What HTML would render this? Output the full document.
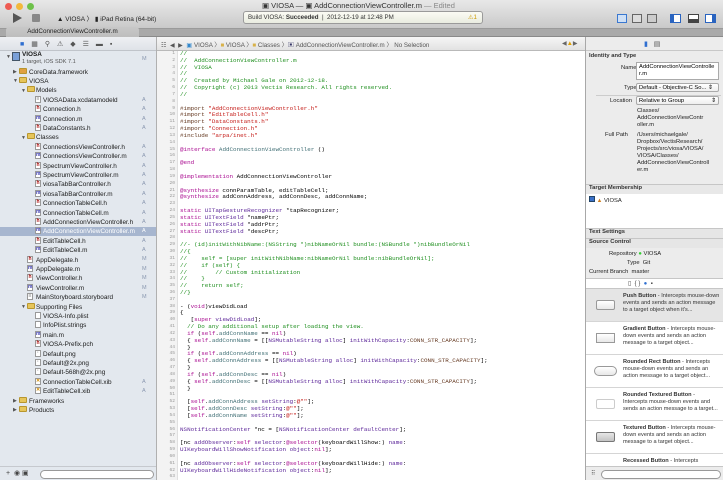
<!DOCTYPE html>
<html><head><meta charset="utf-8"><style>
*{margin:0;padding:0;box-sizing:border-box}
body{width:723px;height:480px;overflow:hidden;position:relative;font-family:"Liberation Sans",sans-serif;background:#fff}
.a{position:absolute}
#title{left:0;top:0;width:723px;height:29px;background:linear-gradient(#e8e8e8,#c9c9c9);border-bottom:1px solid #9a9a9a}
.dot{position:absolute;width:7px;height:7px;border-radius:50%;top:3px}
#tabbar{left:0;top:29px;width:723px;height:8px;background:#a9a9a9;border-bottom:1px solid #8a8a8a}
#nav{left:0;top:37px;width:157px;height:443px;background:#e3e8ee;border-right:1px solid #b0b0b0}
.r{position:absolute;font-size:6.4px;color:#1a1a1a;white-space:nowrap;height:9.4px;line-height:9.4px}
.ic{position:absolute;width:6px;height:7px;top:1.2px;border:1px solid #999;background:#fff;font-size:5px;line-height:5px;text-align:center;font-weight:bold;color:#a11}
.fd{position:absolute;width:8px;height:6px;top:1.7px;background:#e6c55a;border:1px solid #b8962e;border-radius:1px}
.st{position:absolute;left:142px;font-size:5.5px;color:#8a98b0}
.tri{position:absolute;font-size:5px;color:#555}
#ed{left:157px;top:37px;width:428px;height:443px;background:#fff}
#jump{left:157px;top:37px;width:428px;height:14px;background:linear-gradient(#f6f6f6,#e2e2e2);border-bottom:1px solid #b9b9b9;font-size:6.2px;color:#222}
#gut{left:157px;top:51px;width:21px;height:429px;background:#f3f3f3;border-right:1px solid #e0e0e0}
pre{font-family:"Liberation Mono",monospace;font-size:5.9px;line-height:6.83px}
#ln{left:157px;top:51px;width:18px;text-align:right;color:#999;font-size:4.6px}
#code{left:180px;top:51px;color:#000}
.c{color:#1f8f1f}.s{color:#c41a16}.k{color:#aa0d91}.p{color:#5c2699}.t{color:#3f6e74}.m{color:#643820}
#insp{left:585px;top:37px;width:138px;height:443px;background:#ececec;border-left:1px solid #a8a8a8}
.lb{position:absolute;font-size:5.8px;color:#222;white-space:nowrap}
.hd{position:absolute;left:0;width:138px;font-size:5.8px;font-weight:bold;color:#333;padding-left:3px;border-top:1px solid #c6c6c6;background:#e6e6e6}
.lib{position:absolute;left:0;width:138px;height:33px;border-bottom:1px solid #d5d5d5;background:#fff}
.lib .btn{position:absolute;left:10px;top:11px;width:19px;height:10px;border:1px solid #999;border-radius:2px;background:linear-gradient(#fff,#e8e8e8)}
.lib .tx{position:absolute;left:37px;top:4px;width:98px;font-size:5.6px;line-height:7px;color:#333}
</style></head><body>
<div id="title" class="a">
<div class="dot" style="left:5px;background:#ee5b52"></div>
<div class="dot" style="left:16px;background:#f2b83c"></div>
<div class="dot" style="left:27px;background:#6ec14a"></div>
<div class="a" style="left:13px;top:13px;width:0;height:0;border-left:9px solid #555;border-top:5px solid transparent;border-bottom:5px solid transparent"></div>
<div class="a" style="left:32px;top:14px;width:8px;height:8px;background:#888;border-radius:1px"></div>
<div class="a" style="left:57px;top:13px;font-size:6.5px;color:#222">▲ VIOSA 〉 ▮ iPad Retina (64-bit)</div>
<div class="a" style="left:262px;top:1px;font-size:7.5px;color:#333">▣ VIOSA — ▣ AddConnectionViewController.m <span style="color:#888">— Edited</span></div>
<div class="a" style="left:243px;top:11px;width:240px;height:13px;background:linear-gradient(#fbfbf4,#e9ece0);border:1px solid #9a9a9a;border-radius:3px;font-size:6.2px;color:#333;padding:2px 4px">Build VIOSA: <b>Succeeded</b> &nbsp;| &nbsp;2012-12-19 at 12:48 PM<span style="position:absolute;right:5px;color:#c90">⚠1</span></div>
<div class="a" style="left:617px;top:14px;width:10px;height:9px;border:1px solid #3a78d0;background:#cfe0f5"></div>
<div class="a" style="left:632px;top:14px;width:10px;height:9px;border:1px solid #666;background:#ddd"></div>
<div class="a" style="left:647px;top:14px;width:10px;height:9px;border:1px solid #666;background:#ccc"></div>
<div class="a" style="left:670px;top:14px;width:11px;height:9px;border:1px solid #2a64c0;border-left:4px solid #2a64c0;background:#fff"></div>
<div class="a" style="left:688px;top:14px;width:11px;height:9px;border:1px solid #444;border-bottom:4px solid #444;background:#fff"></div>
<div class="a" style="left:705px;top:14px;width:11px;height:9px;border:1px solid #2a64c0;border-right:4px solid #2a64c0;background:#fff"></div>
</div>
<div id="tabbar" class="a"><div class="a" style="left:6px;top:-2px;width:133px;height:10px;background:linear-gradient(#c8c8c8,#bdbdbd);border-radius:3px 3px 0 0;font-size:6.3px;text-align:center;color:#222;line-height:10px">AddConnectionViewController.m</div></div>
<div id="nav" class="a">
<div class="a" style="left:0;top:0;width:156px;height:14px;background:linear-gradient(#eef0f3,#dfe3e8);border-bottom:1px solid #c0c4ca;font-size:7px;color:#555;letter-spacing:7px;padding:3px 0 0 20px"><span style="color:#2f6fd0">■</span>▦⚲⚠◆☰▬▪</div>
</div>
<div class="a" style="left:0;top:227px;width:156px;height:9.4px;background:#a7b6cf"></div>
<div id="rows"></div>
<!-- rows -->
<div class="tri" style="left:6px;top:54px">▼</div>
<div class="a" style="left:12px;top:52px;width:8px;height:9px;background:#7aa0d8;border:1px solid #456"></div>
<div class="r" style="left:22px;top:50px;font-weight:bold">VIOSA</div>
<div class="r" style="left:22px;top:58px;font-size:5.6px;color:#555">1 target, iOS SDK 7.1</div><div class="st" style="top:56px">M</div>
<div class="tri" style="left:13px;top:69px">▶</div><div class="fd" style="left:19px;top:67.5px;background:#e0a040"></div><div class="r" style="left:29px;top:67.5px">CoreData.framework</div>
<div class="tri" style="left:13px;top:78px">▼</div><div class="fd" style="left:19px;top:76.9px"></div><div class="r" style="left:29px;top:76.9px">VIOSA</div>
<div class="tri" style="left:21px;top:88px">▼</div><div class="fd" style="left:27px;top:86.3px"></div><div class="r" style="left:36px;top:86.3px">Models</div>
<div class="ic" style="left:35px;top:95.7px;color:#777">≡</div><div class="r" style="left:43px;top:95.7px">VIOSAData.xcdatamodeld</div><div class="st" style="top:97px">A</div>
<div class="ic" style="left:35px;top:105.1px">h</div><div class="r" style="left:43px;top:105.1px">Connection.h</div><div class="st" style="top:106px">A</div>
<div class="ic" style="left:35px;top:114.5px;color:#33a">m</div><div class="r" style="left:43px;top:114.5px">Connection.m</div><div class="st" style="top:116px">A</div>
<div class="ic" style="left:35px;top:123.9px">h</div><div class="r" style="left:43px;top:123.9px">DataConstants.h</div><div class="st" style="top:125px">A</div>
<div class="tri" style="left:21px;top:135px">▼</div><div class="fd" style="left:27px;top:133.3px"></div><div class="r" style="left:36px;top:133.3px">Classes</div>
<div class="ic" style="left:35px;top:142.7px">h</div><div class="r" style="left:43px;top:142.7px">ConnectionsViewController.h</div><div class="st" style="top:144px">A</div>
<div class="ic" style="left:35px;top:152.1px;color:#33a">m</div><div class="r" style="left:43px;top:152.1px">ConnectionsViewController.m</div><div class="st" style="top:153px">A</div>
<div class="ic" style="left:35px;top:161.5px">h</div><div class="r" style="left:43px;top:161.5px">SpectrumViewController.h</div><div class="st" style="top:163px">A</div>
<div class="ic" style="left:35px;top:170.9px;color:#33a">m</div><div class="r" style="left:43px;top:170.9px">SpectrumViewController.m</div><div class="st" style="top:172px">A</div>
<div class="ic" style="left:35px;top:180.3px">h</div><div class="r" style="left:43px;top:180.3px">viosaTabBarController.h</div><div class="st" style="top:181px">A</div>
<div class="ic" style="left:35px;top:189.7px;color:#33a">m</div><div class="r" style="left:43px;top:189.7px">viosaTabBarController.m</div><div class="st" style="top:191px">A</div>
<div class="ic" style="left:35px;top:199.1px">h</div><div class="r" style="left:43px;top:199.1px">ConnectionTableCell.h</div><div class="st" style="top:200px">A</div>
<div class="ic" style="left:35px;top:208.5px;color:#33a">m</div><div class="r" style="left:43px;top:208.5px">ConnectionTableCell.m</div><div class="st" style="top:210px">A</div>
<div class="ic" style="left:35px;top:217.9px">h</div><div class="r" style="left:43px;top:217.9px">AddConnectionViewController.h</div><div class="st" style="top:219px">A</div>
<div class="ic" style="left:35px;top:227.3px;color:#33a">m</div><div class="r" style="left:43px;top:227.3px;color:#fff">AddConnectionViewController.m</div><div class="st" style="top:228px;color:#fff">A</div>
<div class="ic" style="left:35px;top:236.7px">h</div><div class="r" style="left:43px;top:236.7px">EditTableCell.h</div><div class="st" style="top:238px">A</div>
<div class="ic" style="left:35px;top:246.1px;color:#33a">m</div><div class="r" style="left:43px;top:246.1px">EditTableCell.m</div><div class="st" style="top:247px">A</div>
<div class="ic" style="left:27px;top:255.5px">h</div><div class="r" style="left:36px;top:255.5px">AppDelegate.h</div><div class="st" style="top:256px">M</div>
<div class="ic" style="left:27px;top:264.9px;color:#33a">m</div><div class="r" style="left:36px;top:264.9px">AppDelegate.m</div><div class="st" style="top:266px">M</div>
<div class="ic" style="left:27px;top:274.3px">h</div><div class="r" style="left:36px;top:274.3px">ViewController.h</div><div class="st" style="top:275px">M</div>
<div class="ic" style="left:27px;top:283.7px;color:#33a">m</div><div class="r" style="left:36px;top:283.7px">ViewController.m</div><div class="st" style="top:285px">M</div>
<div class="ic" style="left:27px;top:293.1px;color:#777">≡</div><div class="r" style="left:36px;top:293.1px">MainStoryboard.storyboard</div><div class="st" style="top:294px">M</div>
<div class="tri" style="left:21px;top:304px">▼</div><div class="fd" style="left:27px;top:302.5px"></div><div class="r" style="left:36px;top:302.5px">Supporting Files</div>
<div class="ic" style="left:35px;top:311.9px;color:#777"></div><div class="r" style="left:43px;top:311.9px">VIOSA-Info.plist</div>
<div class="ic" style="left:35px;top:321.3px;color:#777"></div><div class="r" style="left:43px;top:321.3px">InfoPlist.strings</div>
<div class="ic" style="left:35px;top:330.7px;color:#33a">m</div><div class="r" style="left:43px;top:330.7px">main.m</div>
<div class="ic" style="left:35px;top:340.1px">h</div><div class="r" style="left:43px;top:340.1px">VIOSA-Prefix.pch</div>
<div class="ic" style="left:35px;top:349.5px;color:#777">·</div><div class="r" style="left:43px;top:349.5px">Default.png</div>
<div class="ic" style="left:35px;top:358.9px;color:#777">·</div><div class="r" style="left:43px;top:358.9px">Default@2x.png</div>
<div class="ic" style="left:35px;top:368.3px;color:#777">·</div><div class="r" style="left:43px;top:368.3px">Default-568h@2x.png</div>
<div class="ic" style="left:35px;top:377.7px;color:#c80">✕</div><div class="r" style="left:43px;top:377.7px">ConnectionTableCell.xib</div><div class="st" style="top:379px">A</div>
<div class="ic" style="left:35px;top:387.1px;color:#c80">✕</div><div class="r" style="left:43px;top:387.1px">EditTableCell.xib</div><div class="st" style="top:388px">A</div>
<div class="tri" style="left:13px;top:398px">▶</div><div class="fd" style="left:19px;top:396.5px"></div><div class="r" style="left:29px;top:396.5px">Frameworks</div>
<div class="tri" style="left:13px;top:407px">▶</div><div class="fd" style="left:19px;top:405.9px"></div><div class="r" style="left:29px;top:405.9px">Products</div>
<div class="a" style="left:0;top:466px;width:156px;height:14px;background:#e3e8ee;border-top:1px solid #c6c9ce;font-size:7px;color:#444;padding:2px 0 0 6px">+ &nbsp;◉ ▣<div class="a" style="left:40px;top:3px;width:114px;height:9px;border:1px solid #999;border-radius:5px;background:#fff"></div></div>

<div id="ed" class="a"></div>
<div id="jump" class="a"><div class="a" style="left:4px;top:3px;color:#555">☷ &nbsp;◀ &nbsp;▶ &nbsp;<span style="color:#38c">▣</span> VIOSA 〉<span style="color:#d8b24a">■</span> VIOSA 〉<span style="color:#d8b24a">■</span> Classes 〉<span style="color:#336">▣</span> AddConnectionViewController.m 〉 No Selection</div><div class="a" style="left:405px;top:3px;color:#666">◀<span style="color:#e0a000">▲</span>▶</div></div>
<div id="gut" class="a"></div>
<pre id="ln" class="a">1
2
3
4
5
6
7
8
9
10
11
12
13
14
15
16
17
18
19
20
21
22
23
24
25
26
27
28
29
30
31
32
33
34
35
36
37
38
39
40
41
42
43
44
45
46
47
48
49
50
51
52
53
54
55
56
57
58
59
60
61
62
63</pre>
<pre id="code" class="a"><span class="c">//
//  AddConnectionViewController.m
//  VIOSA
//
//  Created by Michael Gale on 2012-12-18.
//  Copyright (c) 2013 Vectis Research. All rights reserved.
//</span>

<span class="m">#import <span class="s">"AddConnectionViewController.h"</span>
#import <span class="s">"EditTableCell.h"</span>
#import <span class="s">"DataConstants.h"</span>
#import <span class="s">"Connection.h"</span>
#include <span class="s">"arpa/inet.h"</span></span>

<span class="k">@interface</span> <span class="t">AddConnectionViewController</span> ()

<span class="k">@end</span>

<span class="k">@implementation</span> AddConnectionViewController

<span class="k">@synthesize</span> connParamTable, editTableCell;
<span class="k">@synthesize</span> addConnAddress, addConnDesc, addConnName;

<span class="k">static</span> <span class="p">UITapGestureRecognizer</span> *tapRecognizer;
<span class="k">static</span> <span class="p">UITextField</span> *namePtr;
<span class="k">static</span> <span class="p">UITextField</span> *addrPtr;
<span class="k">static</span> <span class="p">UITextField</span> *descPtr;

<span class="c">//- (id)initWithNibName:(NSString *)nibNameOrNil bundle:(NSBundle *)nibBundleOrNil
//{
//    self = [super initWithNibName:nibNameOrNil bundle:nibBundleOrNil];
//    if (self) {
//        // Custom initialization
//    }
//    return self;
//}</span>

- (<span class="k">void</span>)viewDidLoad
{
   [<span class="k">super</span> <span class="p">viewDidLoad</span>];
  <span class="c">// Do any additional setup after loading the view.</span>
  <span class="k">if</span> (<span class="k">self</span>.<span class="t">addConnName</span> == <span class="k">nil</span>)
  { <span class="k">self</span>.<span class="t">addConnName</span> = [[<span class="p">NSMutableString</span> <span class="p">alloc</span>] <span class="p">initWithCapacity</span>:<span class="m">CONN_STR_CAPACITY</span>];
  }
  <span class="k">if</span> (<span class="k">self</span>.<span class="t">addConnAddress</span> == <span class="k">nil</span>)
  { <span class="k">self</span>.<span class="t">addConnAddress</span> = [[<span class="p">NSMutableString</span> <span class="p">alloc</span>] <span class="p">initWithCapacity</span>:<span class="m">CONN_STR_CAPACITY</span>];
  }
  <span class="k">if</span> (<span class="k">self</span>.<span class="t">addConnDesc</span> == <span class="k">nil</span>)
  { <span class="k">self</span>.<span class="t">addConnDesc</span> = [[<span class="p">NSMutableString</span> <span class="p">alloc</span>] <span class="p">initWithCapacity</span>:<span class="m">CONN_STR_CAPACITY</span>];
  }

  [<span class="k">self</span>.<span class="t">addConnAddress</span> <span class="p">setString</span>:<span class="s">@""</span>];
  [<span class="k">self</span>.<span class="t">addConnDesc</span> <span class="p">setString</span>:<span class="s">@""</span>];
  [<span class="k">self</span>.<span class="t">addConnName</span> <span class="p">setString</span>:<span class="s">@""</span>];

<span class="p">NSNotificationCenter</span> *nc = [<span class="p">NSNotificationCenter</span> <span class="p">defaultCenter</span>];

[nc <span class="p">addObserver</span>:<span class="k">self</span> <span class="p">selector</span>:<span class="k">@selector</span>(keyboardWillShow:) <span class="p">name</span>:
<span class="p">UIKeyboardWillShowNotification</span> <span class="p">object</span>:<span class="k">nil</span>];

[nc <span class="p">addObserver</span>:<span class="k">self</span> <span class="p">selector</span>:<span class="k">@selector</span>(keyboardWillHide:) <span class="p">name</span>:
<span class="p">UIKeyboardWillHideNotification</span> <span class="p">object</span>:<span class="k">nil</span>];
</pre>

<div id="insp" class="a">
<div class="a" style="left:0;top:0;width:138px;height:14px;border-bottom:1px solid #c8c8c8;font-size:7px;padding:3px 0 0 58px;color:#555"><span style="color:#2f6fd0">▮</span> &nbsp;&nbsp;▤</div>
<div class="lb" style="left:3px;top:16px;font-weight:bold;color:#333">Identity and Type</div>
<div class="lb" style="left:35px;top:28px">Name</div>
<div class="a" style="left:50px;top:25px;width:83px;height:18px;background:#fff;border:1px solid #aaa;font-size:5.8px;line-height:7px;padding:1px 2px">AddConnectionViewControlle r.m</div>
<div class="lb" style="left:38px;top:48px">Type</div>
<div class="a" style="left:50px;top:46px;width:83px;height:9px;background:linear-gradient(#fff,#eee);border:1px solid #aaa;border-radius:2px;font-size:5.8px;padding:1px 2px">Default - Objective-C So... ⇕</div>
<div class="a" style="left:10px;top:58px;width:125px;height:1px;background:#ccc"></div>
<div class="lb" style="left:24px;top:61px">Location</div>
<div class="a" style="left:50px;top:59px;width:83px;height:9px;background:linear-gradient(#fff,#eee);border:1px solid #aaa;border-radius:2px;font-size:5.8px;padding:1px 2px">Relative to Group <span style="float:right">⇕</span></div>
<div class="lb" style="left:51px;top:71px;line-height:7px">Classes/<br>AddConnectionViewContr<br>oller.m</div>
<div class="lb" style="left:19px;top:95px">Full Path</div>
<div class="lb" style="left:51px;top:95px;line-height:7px">/Users/michaelgale/<br>Dropbox/VectisResearch/<br>Projects/src/viosa/VIOSA/<br>VIOSA/Classes/<br>AddConnectionViewControll<br>er.m</div>
<div class="hd" style="top:147px;height:10px;background:#e8e8e8">Target Membership</div>
<div class="a" style="left:0;top:157px;width:138px;height:36px;background:#fff"></div>
<div class="lb" style="left:3px;top:159px"><span style="display:inline-block;width:6px;height:6px;background:#3a70c8;border:1px solid #246"></span> <span style="color:#d08020">▲</span> VIOSA</div>
<div class="hd" style="top:191px;height:10px">Text Settings</div>
<div class="hd" style="top:201px;height:10px">Source Control</div>
<div class="lb" style="left:23px;top:214px">Repository <span style="color:#3c3">●</span> VIOSA</div>
<div class="lb" style="left:41px;top:223px">Type &nbsp;Git</div>
<div class="lb" style="left:3px;top:232px">Current Branch &nbsp;master</div>
<div class="a" style="left:0;top:241px;width:138px;height:11px;background:#fff;border-top:1px solid #c6c6c6;border-bottom:1px solid #c6c6c6;font-size:6px;color:#444;padding:1px 0 0 42px">▯ &nbsp;{ } &nbsp;<span style="color:#2f6fd0">●</span> &nbsp;▪</div>
<div class="lib" style="top:252px;background:#e5e5e5"><div class="btn"></div><div class="tx"><b>Push Button</b> - Intercepts mouse-down events and sends an action message to a target object when it's...</div></div>
<div class="lib" style="top:285px"><div class="btn" style="border-radius:0"></div><div class="tx"><b>Gradient Button</b> - Intercepts mouse-down events and sends an action message to a target object...</div></div>
<div class="lib" style="top:318px"><div class="btn" style="border-radius:5px;left:8px;width:23px"></div><div class="tx"><b>Rounded Rect Button</b> - Intercepts mouse-down events and sends an action message to a target object...</div></div>
<div class="lib" style="top:351px"><div class="btn" style="border-color:#ccc;background:#fff"></div><div class="tx"><b>Rounded Textured Button</b> - Intercepts mouse-down events and sends an action message to a target...</div></div>
<div class="lib" style="top:384px"><div class="btn" style="background:linear-gradient(#e6e6e6,#c4c4c4);border-color:#777"></div><div class="tx"><b>Textured Button</b> - Intercepts mouse-down events and sends an action message to a target object...</div></div>
<div class="lib" style="top:417px;height:14px"><div class="tx"><b>Recessed Button</b> - Intercepts</div></div>
<div class="a" style="left:0;top:429px;width:138px;height:14px;background:#ececec;border-top:1px solid #c6c6c6;font-size:6px;color:#555;padding:3px 0 0 5px">⠿<div class="a" style="left:15px;top:3px;width:120px;height:9px;border:1px solid #999;border-radius:5px;background:#fff"></div></div>
</div>
</body></html>
